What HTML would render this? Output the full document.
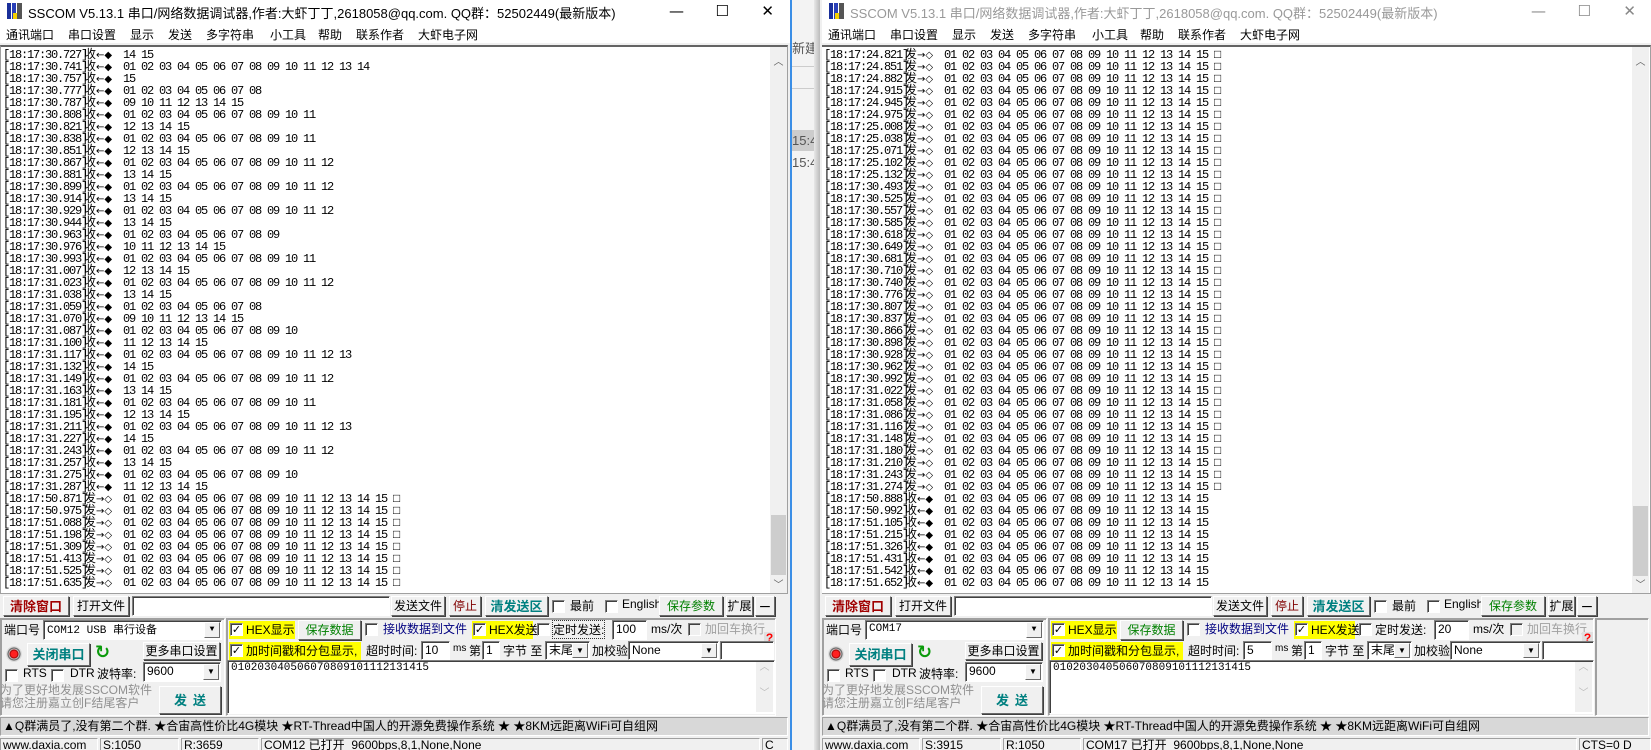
<!DOCTYPE html>
<html><head><meta charset="utf-8">
<style>
*{margin:0;padding:0;box-sizing:border-box}
body{width:1651px;height:750px;overflow:hidden;background:#f0f0f0;position:relative;font-family:"Liberation Sans","Noto Sans CJK SC",sans-serif;font-size:12px;color:#000}
.win{position:absolute;top:0;height:750px;background:#f0f0f0;overflow:hidden}
.a{position:absolute}
.title{position:absolute;left:0;right:0;top:0;height:28px;background:#fff}
.tt{position:absolute;left:28px;top:3px;font-size:13px;white-space:nowrap}
.ico{position:absolute;left:7px;top:3px;width:15px;height:16px;background:linear-gradient(90deg,#1a2f9a 0 4px,#fff 4px 5px,#2a40b8 5px 9px,#fff 9px 10px,#555 10px)}
.ico:after{content:"";position:absolute;left:6px;top:10px;width:4px;height:6px;background:#f5d000}
.tb{position:absolute;top:2px;font-size:15px;color:#000;font-family:"DejaVu Sans",sans-serif}
.menu{position:absolute;left:0;right:0;top:28px;height:15px;background:#fff}
.menu span{position:absolute;top:-2px;font-size:12px;white-space:nowrap}
.ta{position:absolute;top:45px;height:549px;background:#fff;border:1px solid #a0a0a0;border-top:2px solid #646464;overflow:hidden}
.sb{position:absolute;top:0;bottom:0;right:0;width:17px;background:#f0f0f0}
.sb .th{position:absolute;left:1px;right:1px;background:#cdcdcd}
.sb .up,.sb .dn{position:absolute;left:0;width:17px;text-align:center;font-size:10px;color:#606060;font-family:"DejaVu Sans"}
.log{position:absolute;left:2px;top:1px;font-family:"Liberation Mono","Noto Sans CJK SC",monospace;font-size:12px;letter-spacing:-1.2px;line-height:12px}
.log div{height:12px;white-space:pre}
.log b{font-weight:normal;display:inline-block;width:81px}
.log i{font-style:normal;display:inline-block;width:12px;font-size:12px;letter-spacing:0;font-family:"Noto Sans CJK SC",sans-serif}
.log u{text-decoration:none;display:inline-block;width:27px;letter-spacing:0;font-family:"DejaVu Sans",sans-serif;font-size:10px}
.btn{position:absolute;height:20px;background:#f0f0f0;border:1px solid;border-color:#fff #696969 #696969 #fff;box-shadow:1px 1px 0 #404040;text-align:center;line-height:17px;font-size:12px;white-space:nowrap;font-family:"Noto Sans CJK SC",sans-serif}
.inp{position:absolute;background:#fff;border:1px solid;border-color:#808080 #fff #fff #808080;box-shadow:inset 1px 1px 0 #404040;font-size:12px;line-height:17px;padding-left:3px;white-space:nowrap;overflow:hidden}
.cb{position:absolute;width:13px;height:13px;background:#fff;border:1px solid;border-color:#808080 #fff #fff #808080;box-shadow:inset 1px 1px 0 #404040;font-size:11px;line-height:11px;text-align:center;font-family:"DejaVu Sans"}
.t{position:absolute;white-space:nowrap;font-size:12px;font-family:"Liberation Sans","Noto Sans CJK SC",sans-serif}
.yel{position:absolute;background:#ffff00;height:18px}
.dd{position:absolute;right:1px;top:1px;bottom:1px;width:16px;background:#f0f0f0;border:1px solid;border-color:#fff #696969 #696969 #fff;font-size:8px;text-align:center;line-height:14px}
.grp{position:absolute;border:1px solid;border-color:#a0a0a0 #fff #fff #a0a0a0;box-shadow:1px 1px 0 #a0a0a0 inset}
.mq{position:absolute;top:717px;height:19px;background:#d8d8d8;border:1px solid;border-color:#a0a0a0 #fff #fff #a0a0a0;font-size:12px;line-height:17px;padding-left:2px;white-space:nowrap;overflow:hidden}
.st{position:absolute;top:738px;height:14px;border:1px solid;border-color:#a0a0a0 #fff #fff #a0a0a0;font-size:12px;line-height:13px;padding-left:2px;white-space:nowrap;overflow:hidden}
.mono{font-family:"Liberation Mono","Noto Sans CJK SC",monospace;font-size:11px}
</style></head><body>

<div class="a" style="left:790px;top:0;width:30px;height:750px;background:#f3f3f3;border-left:2px solid #3a8ee6">
 <div class="a" style="left:0;top:38px;width:28px;height:20px;font-size:13px;color:#555;font-family:'Noto Sans CJK SC'">新建</div>
 <div class="a" style="left:0;top:66px;width:28px;height:1px;background:#ccc"></div>
 <div class="a" style="left:0;top:88px;width:28px;height:1px;background:#ccc"></div>
 <div class="a" style="left:0;top:130px;width:28px;height:21px;background:#ccc;font-size:13px;color:#555;line-height:21px">15:4</div>
 <div class="a" style="left:0;top:152px;width:28px;height:21px;font-size:13px;color:#555;line-height:21px">15:4</div>
 <div class="a" style="left:22px;top:0;width:6px;height:750px;background:linear-gradient(90deg,#e8e8e8,#bbb)"></div>
</div>

<div class="win" style="left:0;width:790px">
 <div class="title"><div class="ico"></div><div class="tt">SSCOM V5.13.1 串口/网络数据调试器,作者:大虾丁丁,2618058@qq.com. QQ群：52502449(最新版本)</div>
  <div class="tb" style="right:106px">—</div><div class="tb" style="right:61px">☐</div><div class="tb" style="right:16px">✕</div></div>
 <div class="menu"><span style="left:6px">通讯端口</span><span style="left:68px">串口设置</span><span style="left:130px">显示</span><span style="left:168px">发送</span><span style="left:206px">多字符串</span><span style="left:270px">小工具</span><span style="left:318px">帮助</span><span style="left:356px">联系作者</span><span style="left:418px">大虾电子网</span></div>
 <div class="ta" style="left:0;right:2px">
  <div class="log">
<div><b>[18:17:30.727]</b><i>收</i><u>←◆</u>14 15</div>
<div><b>[18:17:30.741]</b><i>收</i><u>←◆</u>01 02 03 04 05 06 07 08 09 10 11 12 13 14</div>
<div><b>[18:17:30.757]</b><i>收</i><u>←◆</u>15</div>
<div><b>[18:17:30.777]</b><i>收</i><u>←◆</u>01 02 03 04 05 06 07 08</div>
<div><b>[18:17:30.787]</b><i>收</i><u>←◆</u>09 10 11 12 13 14 15</div>
<div><b>[18:17:30.808]</b><i>收</i><u>←◆</u>01 02 03 04 05 06 07 08 09 10 11</div>
<div><b>[18:17:30.821]</b><i>收</i><u>←◆</u>12 13 14 15</div>
<div><b>[18:17:30.838]</b><i>收</i><u>←◆</u>01 02 03 04 05 06 07 08 09 10 11</div>
<div><b>[18:17:30.851]</b><i>收</i><u>←◆</u>12 13 14 15</div>
<div><b>[18:17:30.867]</b><i>收</i><u>←◆</u>01 02 03 04 05 06 07 08 09 10 11 12</div>
<div><b>[18:17:30.881]</b><i>收</i><u>←◆</u>13 14 15</div>
<div><b>[18:17:30.899]</b><i>收</i><u>←◆</u>01 02 03 04 05 06 07 08 09 10 11 12</div>
<div><b>[18:17:30.914]</b><i>收</i><u>←◆</u>13 14 15</div>
<div><b>[18:17:30.929]</b><i>收</i><u>←◆</u>01 02 03 04 05 06 07 08 09 10 11 12</div>
<div><b>[18:17:30.944]</b><i>收</i><u>←◆</u>13 14 15</div>
<div><b>[18:17:30.963]</b><i>收</i><u>←◆</u>01 02 03 04 05 06 07 08 09</div>
<div><b>[18:17:30.976]</b><i>收</i><u>←◆</u>10 11 12 13 14 15</div>
<div><b>[18:17:30.993]</b><i>收</i><u>←◆</u>01 02 03 04 05 06 07 08 09 10 11</div>
<div><b>[18:17:31.007]</b><i>收</i><u>←◆</u>12 13 14 15</div>
<div><b>[18:17:31.023]</b><i>收</i><u>←◆</u>01 02 03 04 05 06 07 08 09 10 11 12</div>
<div><b>[18:17:31.038]</b><i>收</i><u>←◆</u>13 14 15</div>
<div><b>[18:17:31.059]</b><i>收</i><u>←◆</u>01 02 03 04 05 06 07 08</div>
<div><b>[18:17:31.070]</b><i>收</i><u>←◆</u>09 10 11 12 13 14 15</div>
<div><b>[18:17:31.087]</b><i>收</i><u>←◆</u>01 02 03 04 05 06 07 08 09 10</div>
<div><b>[18:17:31.100]</b><i>收</i><u>←◆</u>11 12 13 14 15</div>
<div><b>[18:17:31.117]</b><i>收</i><u>←◆</u>01 02 03 04 05 06 07 08 09 10 11 12 13</div>
<div><b>[18:17:31.132]</b><i>收</i><u>←◆</u>14 15</div>
<div><b>[18:17:31.149]</b><i>收</i><u>←◆</u>01 02 03 04 05 06 07 08 09 10 11 12</div>
<div><b>[18:17:31.163]</b><i>收</i><u>←◆</u>13 14 15</div>
<div><b>[18:17:31.181]</b><i>收</i><u>←◆</u>01 02 03 04 05 06 07 08 09 10 11</div>
<div><b>[18:17:31.195]</b><i>收</i><u>←◆</u>12 13 14 15</div>
<div><b>[18:17:31.211]</b><i>收</i><u>←◆</u>01 02 03 04 05 06 07 08 09 10 11 12 13</div>
<div><b>[18:17:31.227]</b><i>收</i><u>←◆</u>14 15</div>
<div><b>[18:17:31.243]</b><i>收</i><u>←◆</u>01 02 03 04 05 06 07 08 09 10 11 12</div>
<div><b>[18:17:31.257]</b><i>收</i><u>←◆</u>13 14 15</div>
<div><b>[18:17:31.275]</b><i>收</i><u>←◆</u>01 02 03 04 05 06 07 08 09 10</div>
<div><b>[18:17:31.287]</b><i>收</i><u>←◆</u>11 12 13 14 15</div>
<div><b>[18:17:50.871]</b><i>发</i><u>→◇</u>01 02 03 04 05 06 07 08 09 10 11 12 13 14 15 □</div>
<div><b>[18:17:50.975]</b><i>发</i><u>→◇</u>01 02 03 04 05 06 07 08 09 10 11 12 13 14 15 □</div>
<div><b>[18:17:51.088]</b><i>发</i><u>→◇</u>01 02 03 04 05 06 07 08 09 10 11 12 13 14 15 □</div>
<div><b>[18:17:51.198]</b><i>发</i><u>→◇</u>01 02 03 04 05 06 07 08 09 10 11 12 13 14 15 □</div>
<div><b>[18:17:51.309]</b><i>发</i><u>→◇</u>01 02 03 04 05 06 07 08 09 10 11 12 13 14 15 □</div>
<div><b>[18:17:51.413]</b><i>发</i><u>→◇</u>01 02 03 04 05 06 07 08 09 10 11 12 13 14 15 □</div>
<div><b>[18:17:51.525]</b><i>发</i><u>→◇</u>01 02 03 04 05 06 07 08 09 10 11 12 13 14 15 □</div>
<div><b>[18:17:51.635]</b><i>发</i><u>→◇</u>01 02 03 04 05 06 07 08 09 10 11 12 13 14 15 □</div>
  </div>
  <div class="sb"><div class="up" style="top:6px">︿</div><div class="th" style="top:468px;height:60px"></div><div class="dn" style="bottom:2px">﹀</div></div>
 </div>
 <div class="btn" style="left:3px;top:596px;width:66px;color:#a00000;font-weight:bold;font-size:13px">清除窗口</div>
 <div class="btn" style="left:73px;top:596px;width:56px">打开文件</div>
 <div class="inp" style="left:132px;top:596px;width:258px;height:20px"></div>
 <div class="btn" style="left:391px;top:596px;width:54px">发送文件</div>
 <div class="btn" style="left:449px;top:596px;width:32px;color:#800000">停止</div>
 <div class="btn" style="left:485px;top:596px;width:63px;color:#008080;font-weight:bold;font-size:13px">清发送区</div>
 <div class="cb" style="left:552px;top:600px"></div><div class="t" style="left:570px;top:597px">最前</div>
 <div class="cb" style="left:605px;top:600px"></div><div class="t" style="left:622px;top:597px">English</div>
 <div class="btn" style="left:659px;top:596px;width:64px;color:#008000">保存参数</div>
 <div class="btn" style="left:726px;top:596px;width:27px">扩展</div>
 <div class="btn" style="left:755px;top:596px;width:20px;font-weight:bold">—</div>
 <div class="grp" style="left:0;top:618px;width:225px;height:98px"></div>
 <div class="t" style="left:4px;top:621px">端口号</div>
 <div class="inp mono" style="left:43px;top:620px;width:179px;height:20px">COM12 USB <span style="font-family:'Noto Sans CJK SC'">串行设备</span><div class="dd">▼</div></div>
 <div class="a" style="left:6px;top:646px;width:16px;height:16px;border-radius:50%;background:radial-gradient(circle,#ff2020 0 3px,#900 4px,#ccc 5px,#555 6px,#ddd 7px)"></div>
 <div class="btn" style="left:27px;top:643px;width:63px;height:23px;line-height:20px;color:#008080;font-weight:bold;font-size:13px">关闭串口</div>
 <div class="a" style="left:95px;top:645px;width:14px;height:16px;color:#0a9a0a;font-size:18px;font-weight:bold;line-height:16px;font-family:'DejaVu Sans'">↻</div>
 <div class="btn" style="left:143px;top:642px;width:77px;height:18px;line-height:15px">更多串口设置</div>
 <div class="cb" style="left:5px;top:669px"></div><div class="t" style="left:23px;top:666px">RTS</div>
 <div class="cb" style="left:51px;top:669px"></div><div class="t" style="left:70px;top:666px">DTR</div>
 <div class="t" style="left:97px;top:665px">波特率:</div>
 <div class="inp" style="left:143px;top:662px;width:78px;height:20px">9600<div class="dd">▼</div></div>
 <div class="t" style="left:0;top:684px;color:#909090;line-height:13px">为了更好地发展SSCOM软件<br>请您注册嘉立创F结尾客户</div>
 <div class="btn" style="left:159px;top:686px;width:62px;height:28px;line-height:25px;color:#008080;font-weight:bold;font-size:13px">发&nbsp;&nbsp;送</div>
 <div class="grp" style="left:226px;top:618px;width:550px;height:98px"></div>
 <div class="yel" style="left:229px;top:621px;width:66px"></div><div class="cb" style="left:230px;top:623px">✓</div><div class="t" style="left:246px;top:621px">HEX显示</div>
 <div class="btn" style="left:298px;top:620px;width:63px;color:#008000">保存数据</div>
 <div class="cb" style="left:365px;top:623px"></div><div class="t" style="left:383px;top:620px;color:#000080">接收数据到文件</div>
 <div class="yel" style="left:472px;top:621px;width:61px"></div><div class="cb" style="left:473px;top:623px">✓</div><div class="t" style="left:489px;top:621px">HEX发送</div>
 <div class="cb" style="left:537px;top:623px"></div><div class="t" style="left:553px;top:621px;outline:1px dotted #333">定时发送:</div>
 <div class="inp" style="left:612px;top:620px;width:35px;height:20px">100</div>
 <div class="t" style="left:651px;top:620px">ms/次</div>
 <div class="cb" style="left:688px;top:623px;background:#f0f0f0"></div><div class="t" style="left:705px;top:620px;color:#a0a0a0">加回车换行</div>
 <div class="a" style="left:764px;top:632px;width:11px;height:12px;background:#e0e0e0;color:#f00;font-weight:bold;font-size:12px;line-height:12px;text-align:center">?</div>
 <div class="yel" style="left:229px;top:642px;width:132px"></div><div class="cb" style="left:230px;top:644px">✓</div><div class="t" style="left:246px;top:642px">加时间戳和分包显示,</div>
 <div class="t" style="left:366px;top:642px">超时时间:</div>
 <div class="inp" style="left:421px;top:641px;width:29px;height:19px">10</div>
 <div class="t" style="left:453px;top:643px;font-size:10px">ms</div>
 <div class="t" style="left:469px;top:642px">第</div>
 <div class="inp" style="left:482px;top:641px;width:18px;height:19px">1</div>
 <div class="t" style="left:503px;top:642px">字节 至</div>
 <div class="inp" style="left:545px;top:641px;width:45px;height:19px">末尾<div class="dd">▼</div></div>
 <div class="t" style="left:592px;top:642px">加校验</div>
 <div class="inp" style="left:628px;top:641px;width:91px;height:19px">None<div class="dd">▼</div></div>
 <div class="inp" style="left:720px;top:641px;width:54px;height:19px"></div>
 <div class="inp mono" style="left:227px;top:660px;width:548px;height:54px;line-height:13px;padding-top:1px">010203040506070809101112131415<div class="a" style="right:1px;top:1px;bottom:1px;width:17px;background:#f0f0f0;color:#bbb;text-align:center;font-size:10px">︿<br><br>﹀</div></div>
 <div class="mq" style="left:0;width:788px">▲Q群满员了,没有第二个群. ★合宙高性价比4G模块 ★RT-Thread中国人的开源免费操作系统 ★ ★8KM远距离WiFi可自组网</div>
 <div class="st" style="left:0;width:98px">www.daxia.com</div>
 <div class="st" style="left:100px;width:79px">S:1050</div>
 <div class="st" style="left:181px;width:78px">R:3659</div>
 <div class="st" style="left:261px;width:499px">COM12 已打开&nbsp; 9600bps,8,1,None,None</div>
 <div class="st" style="left:762px;width:26px">C</div>
</div>

<div class="win" style="left:822px;width:829px">
 <div class="title"><div class="ico"></div><div class="tt" style="color:#999">SSCOM V5.13.1 串口/网络数据调试器,作者:大虾丁丁,2618058@qq.com. QQ群：52502449(最新版本)</div>
  <div class="tb" style="right:105px;color:#888">—</div><div class="tb" style="right:60px;color:#888">☐</div><div class="tb" style="right:15px;color:#888">✕</div></div>
 <div class="menu"><span style="left:6px">通讯端口</span><span style="left:68px">串口设置</span><span style="left:130px">显示</span><span style="left:168px">发送</span><span style="left:206px">多字符串</span><span style="left:270px">小工具</span><span style="left:318px">帮助</span><span style="left:356px">联系作者</span><span style="left:418px">大虾电子网</span></div>
 <div class="ta" style="left:-5px;right:0">
  <div class="log" style="left:6px">
<div><b>[18:17:24.821]</b><i>发</i><u>→◇</u>01 02 03 04 05 06 07 08 09 10 11 12 13 14 15 □</div>
<div><b>[18:17:24.851]</b><i>发</i><u>→◇</u>01 02 03 04 05 06 07 08 09 10 11 12 13 14 15 □</div>
<div><b>[18:17:24.882]</b><i>发</i><u>→◇</u>01 02 03 04 05 06 07 08 09 10 11 12 13 14 15 □</div>
<div><b>[18:17:24.915]</b><i>发</i><u>→◇</u>01 02 03 04 05 06 07 08 09 10 11 12 13 14 15 □</div>
<div><b>[18:17:24.945]</b><i>发</i><u>→◇</u>01 02 03 04 05 06 07 08 09 10 11 12 13 14 15 □</div>
<div><b>[18:17:24.975]</b><i>发</i><u>→◇</u>01 02 03 04 05 06 07 08 09 10 11 12 13 14 15 □</div>
<div><b>[18:17:25.008]</b><i>发</i><u>→◇</u>01 02 03 04 05 06 07 08 09 10 11 12 13 14 15 □</div>
<div><b>[18:17:25.038]</b><i>发</i><u>→◇</u>01 02 03 04 05 06 07 08 09 10 11 12 13 14 15 □</div>
<div><b>[18:17:25.071]</b><i>发</i><u>→◇</u>01 02 03 04 05 06 07 08 09 10 11 12 13 14 15 □</div>
<div><b>[18:17:25.102]</b><i>发</i><u>→◇</u>01 02 03 04 05 06 07 08 09 10 11 12 13 14 15 □</div>
<div><b>[18:17:25.132]</b><i>发</i><u>→◇</u>01 02 03 04 05 06 07 08 09 10 11 12 13 14 15 □</div>
<div><b>[18:17:30.493]</b><i>发</i><u>→◇</u>01 02 03 04 05 06 07 08 09 10 11 12 13 14 15 □</div>
<div><b>[18:17:30.525]</b><i>发</i><u>→◇</u>01 02 03 04 05 06 07 08 09 10 11 12 13 14 15 □</div>
<div><b>[18:17:30.557]</b><i>发</i><u>→◇</u>01 02 03 04 05 06 07 08 09 10 11 12 13 14 15 □</div>
<div><b>[18:17:30.585]</b><i>发</i><u>→◇</u>01 02 03 04 05 06 07 08 09 10 11 12 13 14 15 □</div>
<div><b>[18:17:30.618]</b><i>发</i><u>→◇</u>01 02 03 04 05 06 07 08 09 10 11 12 13 14 15 □</div>
<div><b>[18:17:30.649]</b><i>发</i><u>→◇</u>01 02 03 04 05 06 07 08 09 10 11 12 13 14 15 □</div>
<div><b>[18:17:30.681]</b><i>发</i><u>→◇</u>01 02 03 04 05 06 07 08 09 10 11 12 13 14 15 □</div>
<div><b>[18:17:30.710]</b><i>发</i><u>→◇</u>01 02 03 04 05 06 07 08 09 10 11 12 13 14 15 □</div>
<div><b>[18:17:30.740]</b><i>发</i><u>→◇</u>01 02 03 04 05 06 07 08 09 10 11 12 13 14 15 □</div>
<div><b>[18:17:30.776]</b><i>发</i><u>→◇</u>01 02 03 04 05 06 07 08 09 10 11 12 13 14 15 □</div>
<div><b>[18:17:30.807]</b><i>发</i><u>→◇</u>01 02 03 04 05 06 07 08 09 10 11 12 13 14 15 □</div>
<div><b>[18:17:30.837]</b><i>发</i><u>→◇</u>01 02 03 04 05 06 07 08 09 10 11 12 13 14 15 □</div>
<div><b>[18:17:30.866]</b><i>发</i><u>→◇</u>01 02 03 04 05 06 07 08 09 10 11 12 13 14 15 □</div>
<div><b>[18:17:30.898]</b><i>发</i><u>→◇</u>01 02 03 04 05 06 07 08 09 10 11 12 13 14 15 □</div>
<div><b>[18:17:30.928]</b><i>发</i><u>→◇</u>01 02 03 04 05 06 07 08 09 10 11 12 13 14 15 □</div>
<div><b>[18:17:30.962]</b><i>发</i><u>→◇</u>01 02 03 04 05 06 07 08 09 10 11 12 13 14 15 □</div>
<div><b>[18:17:30.992]</b><i>发</i><u>→◇</u>01 02 03 04 05 06 07 08 09 10 11 12 13 14 15 □</div>
<div><b>[18:17:31.022]</b><i>发</i><u>→◇</u>01 02 03 04 05 06 07 08 09 10 11 12 13 14 15 □</div>
<div><b>[18:17:31.058]</b><i>发</i><u>→◇</u>01 02 03 04 05 06 07 08 09 10 11 12 13 14 15 □</div>
<div><b>[18:17:31.086]</b><i>发</i><u>→◇</u>01 02 03 04 05 06 07 08 09 10 11 12 13 14 15 □</div>
<div><b>[18:17:31.116]</b><i>发</i><u>→◇</u>01 02 03 04 05 06 07 08 09 10 11 12 13 14 15 □</div>
<div><b>[18:17:31.148]</b><i>发</i><u>→◇</u>01 02 03 04 05 06 07 08 09 10 11 12 13 14 15 □</div>
<div><b>[18:17:31.180]</b><i>发</i><u>→◇</u>01 02 03 04 05 06 07 08 09 10 11 12 13 14 15 □</div>
<div><b>[18:17:31.210]</b><i>发</i><u>→◇</u>01 02 03 04 05 06 07 08 09 10 11 12 13 14 15 □</div>
<div><b>[18:17:31.243]</b><i>发</i><u>→◇</u>01 02 03 04 05 06 07 08 09 10 11 12 13 14 15 □</div>
<div><b>[18:17:31.274]</b><i>发</i><u>→◇</u>01 02 03 04 05 06 07 08 09 10 11 12 13 14 15 □</div>
<div><b>[18:17:50.888]</b><i>收</i><u>←◆</u>01 02 03 04 05 06 07 08 09 10 11 12 13 14 15</div>
<div><b>[18:17:50.992]</b><i>收</i><u>←◆</u>01 02 03 04 05 06 07 08 09 10 11 12 13 14 15</div>
<div><b>[18:17:51.105]</b><i>收</i><u>←◆</u>01 02 03 04 05 06 07 08 09 10 11 12 13 14 15</div>
<div><b>[18:17:51.215]</b><i>收</i><u>←◆</u>01 02 03 04 05 06 07 08 09 10 11 12 13 14 15</div>
<div><b>[18:17:51.326]</b><i>收</i><u>←◆</u>01 02 03 04 05 06 07 08 09 10 11 12 13 14 15</div>
<div><b>[18:17:51.431]</b><i>收</i><u>←◆</u>01 02 03 04 05 06 07 08 09 10 11 12 13 14 15</div>
<div><b>[18:17:51.542]</b><i>收</i><u>←◆</u>01 02 03 04 05 06 07 08 09 10 11 12 13 14 15</div>
<div><b>[18:17:51.652]</b><i>收</i><u>←◆</u>01 02 03 04 05 06 07 08 09 10 11 12 13 14 15</div>
  </div>
  <div class="sb" style="right:1px"><div class="up" style="top:6px">︿</div><div class="th" style="top:459px;height:70px"></div><div class="dn" style="bottom:2px">﹀</div></div>
 </div>
 <div class="btn" style="left:3px;top:596px;width:66px;color:#a00000;font-weight:bold;font-size:13px">清除窗口</div>
 <div class="btn" style="left:73px;top:596px;width:56px">打开文件</div>
 <div class="inp" style="left:132px;top:596px;width:258px;height:20px"></div>
 <div class="btn" style="left:391px;top:596px;width:54px">发送文件</div>
 <div class="btn" style="left:449px;top:596px;width:32px;color:#800000">停止</div>
 <div class="btn" style="left:485px;top:596px;width:63px;color:#008080;font-weight:bold;font-size:13px">清发送区</div>
 <div class="cb" style="left:552px;top:600px"></div><div class="t" style="left:570px;top:597px">最前</div>
 <div class="cb" style="left:605px;top:600px"></div><div class="t" style="left:622px;top:597px">English</div>
 <div class="btn" style="left:659px;top:596px;width:64px;color:#008000">保存参数</div>
 <div class="btn" style="left:726px;top:596px;width:27px">扩展</div>
 <div class="btn" style="left:755px;top:596px;width:20px;font-weight:bold">—</div>
 <div class="grp" style="left:0;top:618px;width:225px;height:98px"></div>
 <div class="t" style="left:4px;top:621px">端口号</div>
 <div class="inp mono" style="left:43px;top:620px;width:179px;height:20px">COM17<div class="dd">▼</div></div>
 <div class="a" style="left:6px;top:646px;width:16px;height:16px;border-radius:50%;background:radial-gradient(circle,#ff2020 0 3px,#900 4px,#ccc 5px,#555 6px,#ddd 7px)"></div>
 <div class="btn" style="left:27px;top:643px;width:63px;height:23px;line-height:20px;color:#008080;font-weight:bold;font-size:13px">关闭串口</div>
 <div class="a" style="left:95px;top:645px;width:14px;height:16px;color:#0a9a0a;font-size:18px;font-weight:bold;line-height:16px;font-family:'DejaVu Sans'">↻</div>
 <div class="btn" style="left:143px;top:642px;width:77px;height:18px;line-height:15px">更多串口设置</div>
 <div class="cb" style="left:5px;top:669px"></div><div class="t" style="left:23px;top:666px">RTS</div>
 <div class="cb" style="left:51px;top:669px"></div><div class="t" style="left:70px;top:666px">DTR</div>
 <div class="t" style="left:97px;top:665px">波特率:</div>
 <div class="inp" style="left:143px;top:662px;width:78px;height:20px">9600<div class="dd">▼</div></div>
 <div class="t" style="left:0;top:684px;color:#909090;line-height:13px">为了更好地发展SSCOM软件<br>请您注册嘉立创F结尾客户</div>
 <div class="btn" style="left:159px;top:686px;width:62px;height:28px;line-height:25px;color:#008080;font-weight:bold;font-size:13px">发&nbsp;&nbsp;送</div>
 <div class="grp" style="left:226px;top:618px;width:546px;height:98px"></div>
 <div class="yel" style="left:229px;top:621px;width:66px"></div><div class="cb" style="left:230px;top:623px">✓</div><div class="t" style="left:246px;top:621px">HEX显示</div>
 <div class="btn" style="left:298px;top:620px;width:63px;color:#008000">保存数据</div>
 <div class="cb" style="left:365px;top:623px"></div><div class="t" style="left:383px;top:620px;color:#000080">接收数据到文件</div>
 <div class="yel" style="left:472px;top:621px;width:61px"></div><div class="cb" style="left:473px;top:623px">✓</div><div class="t" style="left:489px;top:621px">HEX发送</div>
 <div class="cb" style="left:537px;top:623px"></div><div class="t" style="left:553px;top:621px">定时发送:</div>
 <div class="inp" style="left:612px;top:620px;width:35px;height:20px">20</div>
 <div class="t" style="left:651px;top:620px">ms/次</div>
 <div class="cb" style="left:688px;top:623px;background:#f0f0f0"></div><div class="t" style="left:705px;top:620px;color:#a0a0a0">加回车换行</div>
 <div class="a" style="left:760px;top:632px;width:11px;height:12px;background:#e0e0e0;color:#f00;font-weight:bold;font-size:12px;line-height:12px;text-align:center">?</div>
 <div class="yel" style="left:229px;top:642px;width:132px"></div><div class="cb" style="left:230px;top:644px">✓</div><div class="t" style="left:246px;top:642px">加时间戳和分包显示,</div>
 <div class="t" style="left:366px;top:642px">超时时间:</div>
 <div class="inp" style="left:421px;top:641px;width:29px;height:19px">5</div>
 <div class="t" style="left:453px;top:643px;font-size:10px">ms</div>
 <div class="t" style="left:469px;top:642px">第</div>
 <div class="inp" style="left:482px;top:641px;width:18px;height:19px">1</div>
 <div class="t" style="left:503px;top:642px">字节 至</div>
 <div class="inp" style="left:545px;top:641px;width:45px;height:19px">末尾<div class="dd">▼</div></div>
 <div class="t" style="left:592px;top:642px">加校验</div>
 <div class="inp" style="left:628px;top:641px;width:91px;height:19px">None<div class="dd">▼</div></div>
 <div class="inp" style="left:720px;top:641px;width:52px;height:19px"></div>
 <div class="inp mono" style="left:227px;top:660px;width:545px;height:54px;line-height:13px;padding-top:1px">010203040506070809101112131415<div class="a" style="right:1px;top:1px;bottom:1px;width:17px;background:#f0f0f0;color:#bbb;text-align:center;font-size:10px">︿<br><br>﹀</div></div>
 <div class="grp" style="left:773px;top:618px;width:54px;height:98px"></div>
 <div class="mq" style="left:0;width:827px">▲Q群满员了,没有第二个群. ★合宙高性价比4G模块 ★RT-Thread中国人的开源免费操作系统 ★ ★8KM远距离WiFi可自组网</div>
 <div class="st" style="left:0;width:98px">www.daxia.com</div>
 <div class="st" style="left:100px;width:79px">S:3915</div>
 <div class="st" style="left:181px;width:78px">R:1050</div>
 <div class="st" style="left:261px;width:494px">COM17 已打开&nbsp; 9600bps,8,1,None,None</div>
 <div class="st" style="left:757px;width:72px">CTS=0 D</div>
</div>
</body></html>
